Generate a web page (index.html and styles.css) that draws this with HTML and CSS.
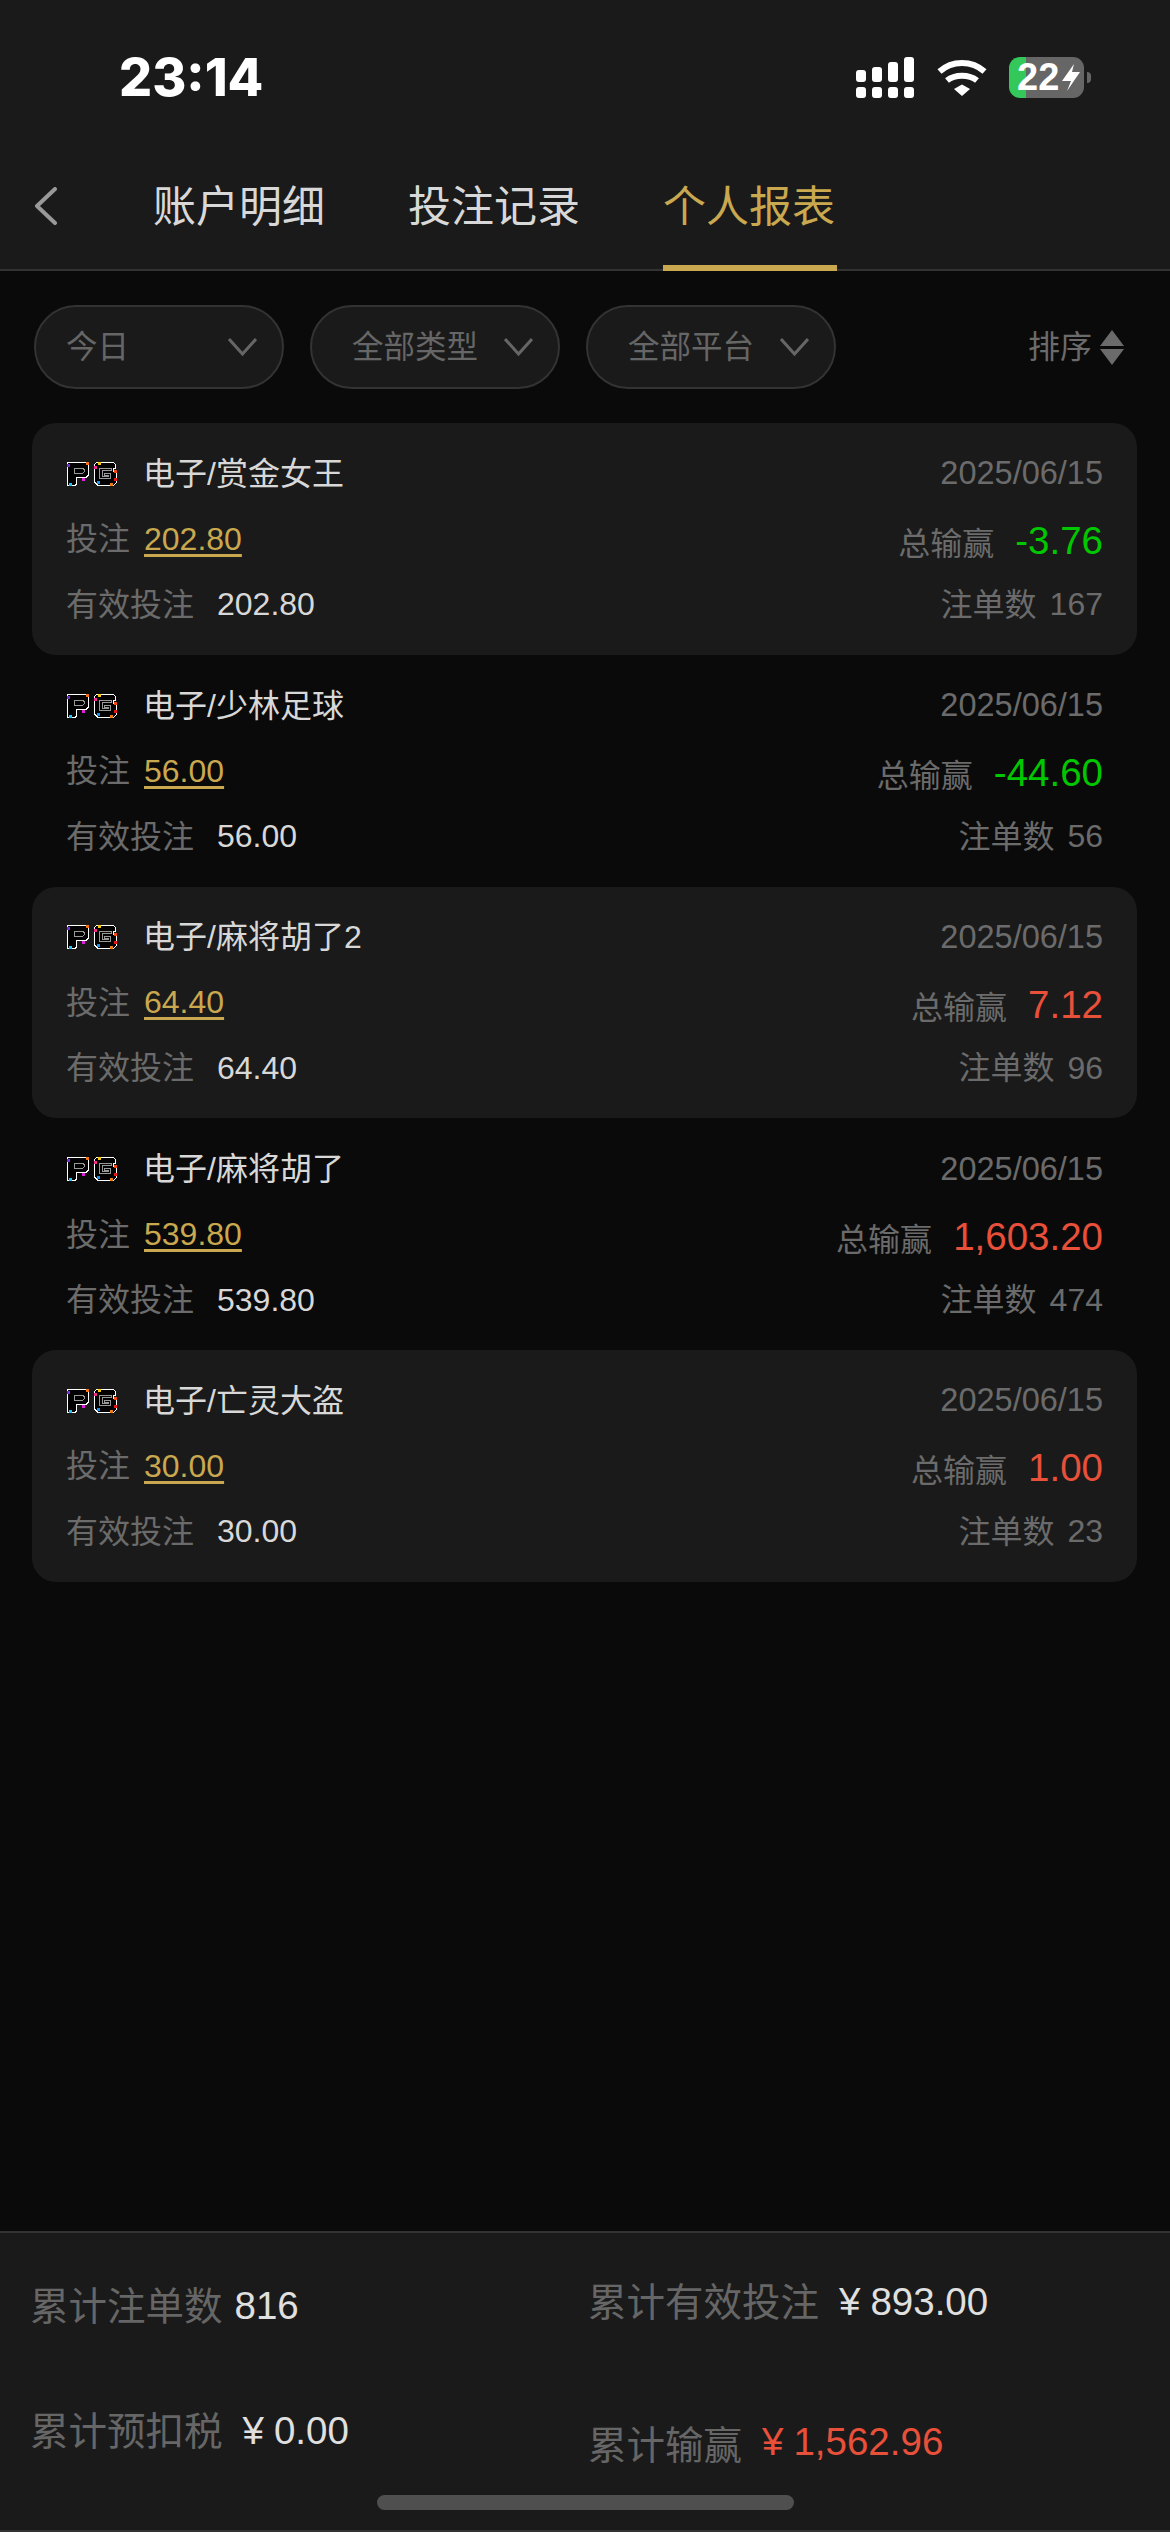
FILE: index.html
```html
<!DOCTYPE html>
<html>
    <head>
        <meta charset="utf-8">
        <title>个人报表</title>
        <link rel="stylesheet" href="styles.css">
    </head>

    <body>
        <!-- shared PG logo, used by every row -->
        <svg class="defs" width="0" height="0">
            <symbol id="pgLogo" viewBox="0 0 50 25">
                <path d="M1 1H19L22 4V13L19 16H10V22L8 24H2L1 23Z" fill="#000" stroke="#fff" stroke-width="1"/>
                <path d="M8 7H16L18 9V10L16 12H8Z" fill="none" stroke="#999" stroke-width="1"/>
                <path d="M30 1H45L48 4V7H46V10H49V20L45 24H31L27 20V4Z" fill="#000" stroke="#fff" stroke-width="1"/>
                <path d="M33 7H44V9H35V15H41V14H37V12H43V17H33L32 16V8Z" fill="none" stroke="#999" stroke-width="1"/>
                <rect x="1" y="3" width="3" height="3" fill="#7a2be0"/>
                <rect x="19" y="1" width="3" height="3" fill="#f0701a"/>
                <rect x="15" y="16" width="3" height="3" fill="#e01fd8"/>
                <rect x="3" y="21" width="3" height="3" fill="#29c4f0"/>
                <rect x="31" y="1" width="3" height="3" fill="#f5c518"/>
                <rect x="27" y="5" width="3" height="3" fill="#ee2a90"/>
                <rect x="46" y="9" width="3" height="3" fill="#f04a18"/>
                <rect x="46" y="16" width="3" height="3" fill="#e01a1a"/>
                <rect x="42" y="21" width="3" height="3" fill="#f07a18"/>
                <rect x="30" y="19" width="3" height="3" fill="#1e90f0"/>
            </symbol>
        </svg>

        <div class="page">
            <div class="topBar">
                <div class="statusBar">
                    <span class="clock">23:14</span>
                    <div class="statusIcons">
                        <svg class="signal" viewBox="0 0 58 41" fill="#fff">
                            <rect x="0" y="13" width="10" height="12" rx="3"/>
                            <rect x="16" y="10" width="10" height="15" rx="3"/>
                            <rect x="32" y="5" width="10" height="20" rx="3"/>
                            <rect x="48" y="0" width="10" height="25" rx="3"/>
                            <rect x="0" y="30" width="10" height="11" rx="3"/>
                            <rect x="16" y="30" width="10" height="11" rx="3"/>
                            <rect x="32" y="30" width="10" height="11" rx="3"/>
                            <rect x="48" y="30" width="10" height="11" rx="3"/>
                        </svg>
                        <svg class="wifi" viewBox="0 0 50 37" fill="none" stroke="#fff" stroke-width="6">
                            <path d="M2.500 12.500C15 1 35 1 47.500 12.500"/>
                            <path d="M10 21.500C18 15 32 15 40 21.500"/>
                            <path d="M17 30L25 25.500L33 30L25 37Z" fill="#fff" stroke="none"/>
                        </svg>
                        <div class="battery">
                            <span>22</span>
                            <svg class="bolt" viewBox="0 0 18 27" fill="#fff"><path d="M12 0L0 17H9L5 27L18 8H10Z"/></svg>
                        </div>
                        <div class="batteryNub"></div>
                    </div>
                </div>

                <div class="tabBar">
                    <svg class="backArrow" viewBox="0 0 23 38" fill="none" stroke="#999" stroke-width="4" stroke-linecap="round" stroke-linejoin="round">
                        <path d="M21 2L3 19L21 36"/>
                    </svg>
                    <div class="tab">账户明细</div>
                    <div class="tab">投注记录</div>
                    <div class="tab tabActive">个人报表</div>
                </div>
            </div>

            <div class="filterBar">
                <div class="filterPill">
                    <span class="filterToday">今日</span>
                    <svg class="chevron" viewBox="0 0 29 18" fill="none" stroke="#666" stroke-width="3"><path d="M1 1L14.500 16L28 1"/></svg>
                </div>
                <div class="filterPill">
                    <span>全部类型</span>
                    <svg class="chevron" viewBox="0 0 29 18" fill="none" stroke="#666" stroke-width="3"><path d="M1 1L14.500 16L28 1"/></svg>
                </div>
                <div class="filterPill">
                    <span>全部平台</span>
                    <svg class="chevron" viewBox="0 0 29 18" fill="none" stroke="#666" stroke-width="3"><path d="M1 1L14.500 16L28 1"/></svg>
                </div>
                <div class="sortButton">
                    <span class="label">排序</span>
                    <svg class="sortIcon" viewBox="0 0 24 35" fill="#6b6b6b">
                        <path d="M12 0L24 16H0Z"/>
                        <path d="M0 19H24L12 35Z"/>
                    </svg>
                </div>
            </div>

            <div class="reportList">
                <div class="reportRow shaded">
                    <div class="line">
                        <div class="gameName"><svg class="logo"><use href="#pgLogo"/></svg><span class="label">电子/赏金女王</span></div>
                        <div class="muted date">2025/06/15</div>
                    </div>
                    <div class="line">
                        <div class="muted"><span class="label">投注</span><span class="betAmount">202.80</span></div>
                        <div class="muted resultGroup">总输赢<span class="result loss">-3.76</span></div>
                    </div>
                    <div class="line">
                        <div class="muted"><span class="label">有效投注</span><span class="validAmount">202.80</span></div>
                        <div class="muted"><span class="label">注单数</span><span class="orderCount">167</span></div>
                    </div>
                </div>

                <div class="reportRow">
                    <div class="line">
                        <div class="gameName"><svg class="logo"><use href="#pgLogo"/></svg><span class="label">电子/少林足球</span></div>
                        <div class="muted date">2025/06/15</div>
                    </div>
                    <div class="line">
                        <div class="muted"><span class="label">投注</span><span class="betAmount">56.00</span></div>
                        <div class="muted resultGroup">总输赢<span class="result loss">-44.60</span></div>
                    </div>
                    <div class="line">
                        <div class="muted"><span class="label">有效投注</span><span class="validAmount">56.00</span></div>
                        <div class="muted"><span class="label">注单数</span><span class="orderCount">56</span></div>
                    </div>
                </div>

                <div class="reportRow shaded">
                    <div class="line">
                        <div class="gameName"><svg class="logo"><use href="#pgLogo"/></svg><span class="label">电子/麻将胡了2</span></div>
                        <div class="muted date">2025/06/15</div>
                    </div>
                    <div class="line">
                        <div class="muted"><span class="label">投注</span><span class="betAmount">64.40</span></div>
                        <div class="muted resultGroup">总输赢<span class="result win">7.12</span></div>
                    </div>
                    <div class="line">
                        <div class="muted"><span class="label">有效投注</span><span class="validAmount">64.40</span></div>
                        <div class="muted"><span class="label">注单数</span><span class="orderCount">96</span></div>
                    </div>
                </div>

                <div class="reportRow">
                    <div class="line">
                        <div class="gameName"><svg class="logo"><use href="#pgLogo"/></svg><span class="label">电子/麻将胡了</span></div>
                        <div class="muted date">2025/06/15</div>
                    </div>
                    <div class="line">
                        <div class="muted"><span class="label">投注</span><span class="betAmount">539.80</span></div>
                        <div class="muted resultGroup">总输赢<span class="result win">1,603.20</span></div>
                    </div>
                    <div class="line">
                        <div class="muted"><span class="label">有效投注</span><span class="validAmount">539.80</span></div>
                        <div class="muted"><span class="label">注单数</span><span class="orderCount">474</span></div>
                    </div>
                </div>

                <div class="reportRow shaded">
                    <div class="line">
                        <div class="gameName"><svg class="logo"><use href="#pgLogo"/></svg><span class="label">电子/亡灵大盗</span></div>
                        <div class="muted date">2025/06/15</div>
                    </div>
                    <div class="line">
                        <div class="muted"><span class="label">投注</span><span class="betAmount">30.00</span></div>
                        <div class="muted resultGroup">总输赢<span class="result win">1.00</span></div>
                    </div>
                    <div class="line">
                        <div class="muted"><span class="label">有效投注</span><span class="validAmount">30.00</span></div>
                        <div class="muted"><span class="label">注单数</span><span class="orderCount">23</span></div>
                    </div>
                </div>
            </div>

            <div class="summary">
                <div class="summaryLeft">
                    <div class="summaryItem"><span class="label">累计注单数</span><span class="summaryValue tight">816</span></div>
                    <div class="summaryItem"><span class="label">累计预扣税</span><span class="summaryValue"><span class="yen">¥</span>0.00</span></div>
                </div>
                <div class="summaryRight">
                    <div class="summaryItem"><span class="label">累计有效投注</span><span class="summaryValue"><span class="yen">¥</span>893.00</span></div>
                    <div class="summaryItem">累计输赢<span class="summaryValue totalWin"><span class="yen">¥</span>1,562.96</span></div>
                </div>
                <div class="homeIndicator"></div>
            </div>
        </div>
    </body>
</html>
```

FILE: styles.css
```css
* {
    box-sizing: border-box;
}

body {
    margin: 0;
    background-color: #0a0a0a;
    font-family: "Liberation Sans", "Noto Sans CJK SC", sans-serif;
}

.defs {
    display: block;
}

.page {
    display: flex;
    flex-direction: column;
    width: 1170px;
    height: 2532px;
    overflow: hidden;
}

/* chinese text sits low next to the digits, lift it a little */
.label {
    margin-bottom: 6px;
}

/* header */

.topBar {
    height: 271px;
    background-color: #1a1a1a;
    border-bottom: 2px solid #333;
}

.statusBar {
    display: flex;
    justify-content: space-between;
    align-items: center;
    height: 98px;
    padding: 57px 79px 0 119px;
}

.clock {
    font-family: Inter, sans-serif;
    font-size: 52px;
    font-weight: 800;
    line-height: 41px;
    color: #fff;
}

.statusIcons {
    display: flex;
    align-items: center;
}

.signal {
    width: 58px;
    height: 41px;
    margin-right: 23px;
}

.wifi {
    width: 50px;
    height: 37px;
    margin-right: 22px;
}

.battery {
    display: flex;
    align-items: center;
    width: 75px;
    height: 41px;
    padding-left: 8px;
    border-radius: 11px;
    background: linear-gradient(to right, #34c759 17px, #666 17px);
    font-size: 38px;
    font-weight: 700;
    line-height: 41px;
    color: #fff;
}

.bolt {
    width: 18px;
    height: 27px;
    margin-left: 3px;
}

.batteryNub {
    width: 4px;
    height: 11px;
    margin-left: 3px;
    border-radius: 0 4px 4px 0;
    background-color: #666;
}

.tabBar {
    display: flex;
    align-items: flex-start;
    height: 171px;
    padding: 87px 0 0 34px;
}

.backArrow {
    width: 23px;
    height: 38px;
    margin: 2px 96px 0 0;
}

.tab {
    position: relative;
    width: 174px;
    margin-right: 81px;
    font-size: 43px;
    line-height: 44px;
    white-space: nowrap;
    color: #d8d8d8;
}

.tabActive {
    color: #c9a84f;
}

/* underline sits on top of the header border */
.tabActive::after {
    content: "";
    position: absolute;
    left: 0;
    right: 0;
    top: 80px;
    height: 6px;
    background-color: #c9a84f;
}

/* filters */

.filterBar {
    display: flex;
    align-items: center;
    height: 152px;
    padding: 0 46px 0 34px;
    gap: 26px;
}

.filterPill {
    display: flex;
    justify-content: space-between;
    align-items: center;
    width: 250px;
    height: 84px;
    padding: 0 25px 6px 40px;
    background-color: #1a1a1a;
    border: 2px solid #333;
    border-radius: 42px;
    font-size: 31.500px;
    color: #666;
}

.filterToday {
    margin-left: -10px;
}

.chevron {
    width: 29px;
    height: 18px;
    margin-top: 6px;
}

.sortButton {
    display: flex;
    align-items: center;
    margin-left: auto;
    gap: 8px;
    font-size: 32px;
    color: #6b6b6b;
}

.sortIcon {
    width: 24px;
    height: 35px;
}

/* report rows */

.reportList {
    display: flex;
    flex-direction: column;
    padding: 0 33px 0 32px;
}

.reportRow {
    height: 231.750px;
    padding: 18px 34px 0 34px;
    border-radius: 24px;
}

.shaded {
    background-color: #1a1a1a;
}

.line {
    display: flex;
    justify-content: space-between;
    align-items: center;
    height: 65.500px;
    font-size: 32px;
}

.gameName {
    display: flex;
    align-items: center;
    color: #d8d8d8;
}

.logo {
    width: 52px;
    height: 26px;
    margin-right: 25px;
    shape-rendering: crispEdges;
}

.muted {
    display: flex;
    align-items: center;
    color: #6b6b6b;
}

.date {
    font-size: 32.500px;
}

.betAmount {
    margin-left: 14px;
    color: #c9a84f;
    text-decoration: underline;
    text-underline-offset: 4px;
}

.validAmount {
    margin-left: 23px;
    color: #d8d8d8;
}

.orderCount {
    margin-left: 13px;
}

.resultGroup {
    margin-top: 4px;
}

.result {
    margin-left: 21px;
    font-size: 38.500px;
}

.loss {
    color: #00c800;
}

.win {
    color: #e8503a;
}

/* totals */

.summary {
    position: relative;
    display: flex;
    margin-top: auto;
    height: 301px;
    background-color: #1a1a1a;
    border-top: 2px solid #333;
    border-bottom: 2px solid #333;
    font-size: 38.500px;
    color: #666;
}

.summaryLeft {
    display: flex;
    flex-direction: column;
    gap: 80px;
    width: 588px;
    padding: 50px 0 0 30px;
}

.summaryRight {
    display: flex;
    flex-direction: column;
    gap: 95px;
    padding: 46px 0 0 0;
}

.summaryItem {
    display: flex;
    align-items: center;
    height: 45px;
}

.summaryValue {
    margin-left: 20px;
    color: #e0e0e0;
}

.tight {
    margin-left: 12px;
}

.yen {
    margin-right: 10px;
}

.totalWin {
    color: #e8503a;
}

.homeIndicator {
    position: absolute;
    left: 377px;
    bottom: 20px;
    width: 417px;
    height: 15px;
    border-radius: 8px;
    background-color: #4f4f4f;
}
```
